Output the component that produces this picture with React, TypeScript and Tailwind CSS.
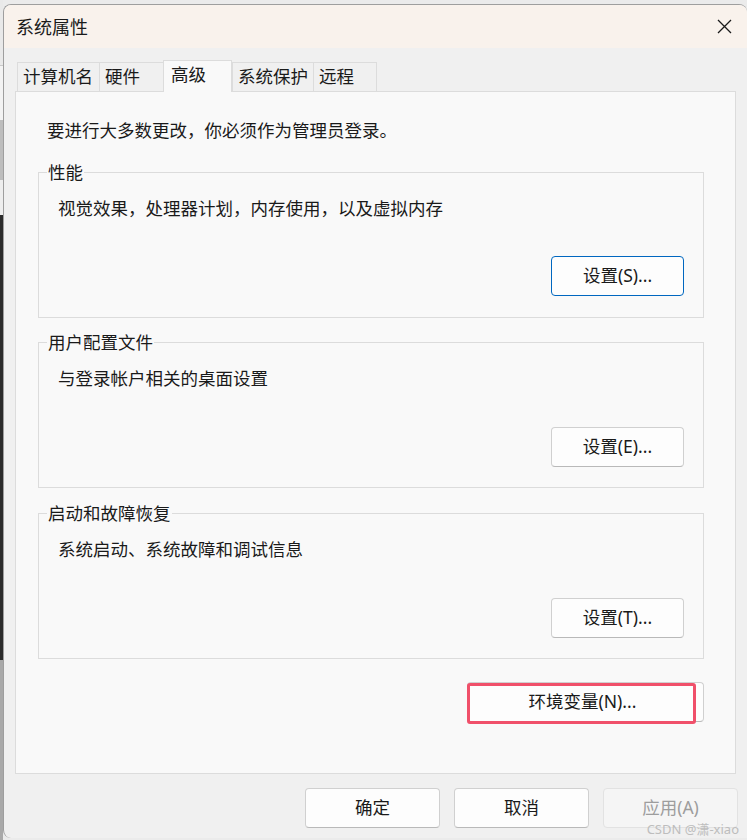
import React from "react";

const FONT = "'Noto Sans', 'Noto Sans CJK SC', sans-serif";

function Btn({
  children,
  className = "",
  variant = "normal",
}: {
  children: React.ReactNode;
  className?: string;
  variant?: "normal" | "focus" | "disabled";
}) {
  const v =
    variant === "focus"
      ? "border-[#0067c0] bg-[#fdfdfd] text-[#1a1a1a]"
      : variant === "disabled"
      ? "border-[#e2e2e2] bg-[#f5f5f5] text-[#9d9d9d]"
      : "border-[#d0d0d0] border-b-[#b9b9b9] bg-[#fdfdfd] text-[#1a1a1a]";
  return (
    <div
      className={`flex items-center justify-center rounded-[4px] border text-[17.5px] leading-none ${v} ${className}`}
    >
      {children}
    </div>
  );
}

function Group({
  label,
  desc,
  btn,
  focus,
  className = "",
  btnGap = "mt-[36px]",
}: {
  label: string;
  desc: string;
  btn: string;
  focus?: boolean;
  className?: string;
  btnGap?: string;
}) {
  return (
    <div
      className={`relative flex h-[146px] flex-col border border-[#dcdcdc] pl-[19px] pr-[19px] pt-[23px] ${className}`}
    >
      <span className="absolute left-[8px] top-[-13px] bg-[#f9f9f9] px-[1px] text-[17.5px] leading-[24px] text-[#1a1a1a]">
        {label}
      </span>
      <div className="h-[24px] text-[17.5px] leading-[24px] text-[#1a1a1a]">{desc}</div>
      <div className={`${btnGap} flex justify-end`}>
        <Btn variant={focus ? "focus" : "normal"} className="h-[40px] w-[133px]">
          {btn}
        </Btn>
      </div>
    </div>
  );
}

export default function App() {
  const tabs = [
    { t: "计算机名", w: "w-[83px]" },
    { t: "硬件", w: "w-[65px]" },
    { t: "高级", w: "w-[69px]", sel: true },
    { t: "系统保护", w: "w-[82px]" },
    { t: "远程", w: "w-[64px]" },
  ];
  return (
    <div
      className="relative flex h-[840px] w-[747px] overflow-hidden bg-[#ebebeb]"
      style={{ fontFamily: FONT }}
    >
      {/* desktop strip at left */}
      <div className="flex w-[3px] flex-col">
        <div className="h-[65px] bg-[#e9e9e9]" />
        <div className="h-[1px] bg-[#c9c9c9]" />
        <div className="h-[54px] bg-[#f3f3f3]" />
        <div className="h-[60px] bg-[#bdbdbd]" />
        <div className="h-[35px] bg-[#eeeeee]" />
        <div className="h-[445px] bg-[#2b2b2b]" />
        <div className="flex-1 bg-[#a9a9a9]" />
      </div>

      {/* window */}
      <div className="mt-[4px] mb-[2px] flex w-[744px] flex-col overflow-hidden rounded-t-[8px] rounded-bl-[8px] border-l border-t border-[#9e9e9e] bg-[#f0f0f0]">
        {/* title bar */}
        <div className="flex h-[43px] items-center justify-between bg-[#f9f2ec] pl-[12px] pr-[15px]">
          <span className="text-[18px] leading-none text-[#1a1a1a]">系统属性</span>
          <svg width="15" height="15" viewBox="0 0 15 15" className="text-[#1a1a1a]">
            <path d="M1 1L14 14M14 1L1 14" stroke="currentColor" strokeWidth="1.3" />
          </svg>
        </div>

        {/* body */}
        <div className="relative flex flex-1 flex-col">
          {/* tabs */}
          <div className="ml-[13px] mt-[12px] flex items-start">
            {tabs.map((tab) =>
              tab.sel ? (
                <div
                  key={tab.t}
                  className={`relative z-10 -mb-[1px] h-[32px] ${tab.w} border-l border-r border-t border-[#dcdcdc] bg-[#f9f9f9] pl-[7px] text-[17.5px] leading-[27px] text-[#1a1a1a]`}
                >
                  {tab.t}
                </div>
              ) : (
                <div
                  key={tab.t}
                  className={`mt-[2px] h-[29px] ${tab.w} -mr-[1px] border-l border-r border-t border-[#dcdcdc] bg-[#f0f0f0] pl-[5px] text-[17.5px] leading-[27px] text-[#1a1a1a]`}
                >
                  {tab.t}
                </div>
              )
            )}
          </div>

          {/* panel */}
          <div className="ml-[11px] flex h-[683px] w-[721px] flex-col border border-[#dcdcdc] bg-[#f9f9f9] pl-[22px] pr-[31px] pt-[26px]">
            <div className="ml-[9px] h-[24px] text-[17.5px] leading-[24px] text-[#1a1a1a]">
              要进行大多数更改，你必须作为管理员登录。
            </div>
            <Group
              className="mt-[30px]"
              label="性能"
              desc="视觉效果，处理器计划，内存使用，以及虚拟内存"
              btn="设置(S)..."
              focus
            />
            <Group
              className="mt-[24px]"
              btnGap="mt-[37px]"
              label="用户配置文件"
              desc="与登录帐户相关的桌面设置"
              btn="设置(E)..."
            />
            <Group
              className="mt-[25px]"
              btnGap="mt-[37px]"
              label="启动和故障恢复"
              desc="系统启动、系统故障和调试信息"
              btn="设置(T)..."
            />
            <div className="mt-[23px] flex justify-end">
              <div className="relative">
                <Btn className="h-[40px] w-[237px] pr-[6px]">环境变量(N)...</Btn>
                <div className="pointer-events-none absolute left-0 top-[1px] h-[41px] w-[229px] rounded-[3px] border-[3px] border-[#f0506a]" />
              </div>
            </div>
          </div>

          {/* bottom buttons */}
          <div className="mt-[14px] flex justify-end gap-[14px] pr-[9px]">
            <Btn className="h-[40px] w-[135px]">确定</Btn>
            <Btn className="h-[40px] w-[135px]">取消</Btn>
            <Btn variant="disabled" className="h-[40px] w-[135px]">
              应用(A)
            </Btn>
          </div>

          <div className="pointer-events-none absolute bottom-[2px] right-[8px] text-[13px] leading-none text-[#bdbdbd]">
            CSDN @潇-xiao
          </div>
        </div>
      </div>
    </div>
  );
}
